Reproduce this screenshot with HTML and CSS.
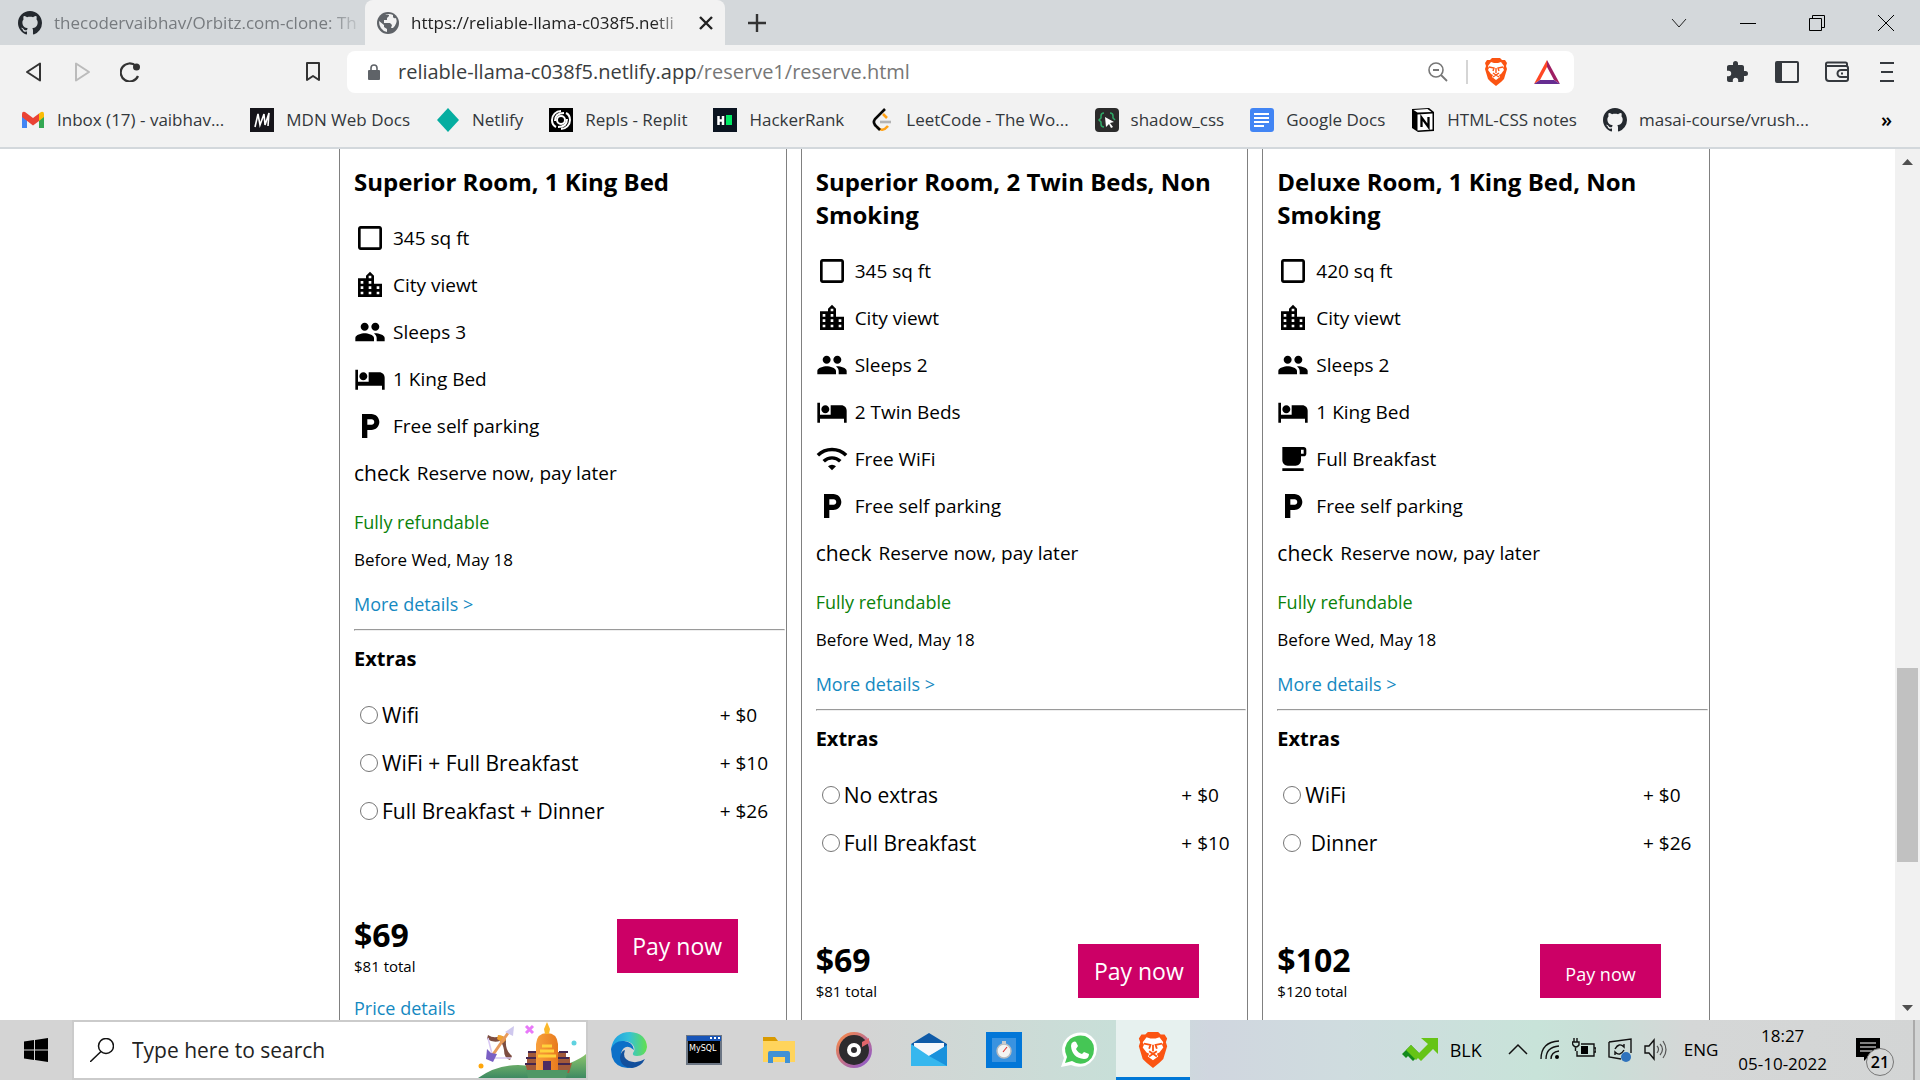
FILE: index.html
```
<!DOCTYPE html>
<html lang="en">
<head>
<meta charset="utf-8">
<title>Reserve a room</title>
<link rel="stylesheet" href="styles.css">
</head>
<body>
<svg class="sprite" aria-hidden="true">
  <symbol id="square" viewBox="0 0 24 24"><path d="M19 5v14H5V5h14m0-2H5c-1.1 0-2 .9-2 2v14c0 1.1.9 2 2 2h14c1.1 0 2-.9 2-2V5c0-1.1-.9-2-2-2z"/></symbol>
  <symbol id="city" viewBox="0 0 24 24"><path d="M15 11V5l-3-3-3 3v2H3v14h18V11h-6zm-8 8H5v-2h2v2zm0-4H5v-2h2v2zm0-4H5V9h2v2zm6 8h-2v-2h2v2zm0-4h-2v-2h2v2zm0-4h-2V9h2v2zm0-4h-2V5h2v2zm6 12h-2v-2h2v2zm0-4h-2v-2h2v2z"/></symbol>
  <symbol id="people" viewBox="0 0 24 24"><path d="M16 11c1.66 0 2.99-1.34 2.99-3S17.66 5 16 5c-1.66 0-3 1.34-3 3s1.34 3 3 3zm-8 0c1.66 0 2.99-1.34 2.99-3S9.66 5 8 5C6.34 5 5 6.34 5 8s1.34 3 3 3zm0 2c-2.33 0-7 1.17-7 3.5V19h14v-2.5c0-2.33-4.67-3.5-7-3.5zm8 0c-.29 0-.62.02-.97.05 1.16.84 1.97 1.97 1.97 3.45V19h6v-2.5c0-2.33-4.67-3.5-7-3.5z"/></symbol>
  <symbol id="bed" viewBox="0 0 24 24"><path d="M7 13c1.66 0 3-1.34 3-3S8.66 7 7 7s-3 1.34-3 3 1.34 3 3 3zm12-6h-8v7H3V5H1v15h2v-3h18v3h2v-9c0-2.21-1.79-4-4-4z"/></symbol>
  <symbol id="parking" viewBox="0 0 24 24"><path d="M13 3H6v18h4v-6h3c3.31 0 6-2.69 6-6s-2.69-6-6-6zm.2 8H10V7h3.2c1.1 0 2 .9 2 2s-.9 2-2 2z"/></symbol>
  <symbol id="wifi" viewBox="0 0 24 24"><path d="M1.400 9.200a15 15 0 0 1 21.200 0M5.800 13.700a8.800 8.800 0 0 1 12.400 0" fill="none" stroke="#000" stroke-width="2.600"/><path d="M12 20.500l-3-3a4.200 4.200 0 0 1 6 0z"/></symbol>
  <symbol id="cup" viewBox="0 0 24 24"><path d="M20 3H4v10c0 2.210 1.790 4 4 4h6c2.210 0 4-1.790 4-4v-3h2c1.110 0 2-.890 2-2V5c0-1.110-.890-2-2-2zm0 5h-2V5h2v3zM4 19h16v2H4z"/></symbol>
  <symbol id="github" viewBox="0 0 16 16"><path fill="#24292f" d="M8 0C3.580 0 0 3.580 0 8c0 3.540 2.290 6.530 5.470 7.590.4.070.55-.17.55-.38 0-.19-.01-.82-.01-1.490-2.010.37-2.530-.49-2.690-.94-.09-.23-.48-.94-.82-1.130-.28-.15-.68-.52-.01-.53.63-.01 1.080.58 1.230.82.72 1.210 1.870.87 2.330.66.07-.52.28-.87.51-1.070-1.780-.2-3.640-.89-3.640-3.950 0-.87.31-1.590.82-2.150-.08-.2-.36-1.020.08-2.120 0 0 .67-.21 2.200.82.64-.18 1.320-.27 2-.27.68 0 1.360.09 2 .27 1.530-1.040 2.200-.82 2.200-.82.44 1.100.16 1.920.08 2.120.51.56.82 1.270.82 2.150 0 3.070-1.870 3.750-3.650 3.950.29.25.54.73.54 1.480 0 1.070-.01 1.930-.01 2.200 0 .21.15.46.55.38A8.013 8.013 0 0 0 16 8c0-4.420-3.580-8-8-8z"/></symbol>
  <symbol id="brave" viewBox="0 0 24 28"><path fill="#fb5412" d="M8 0h8l2 2h3l2 3-1 3 1 3-3 10-3 3-5 4-5-4-3-3L1 11l1-3-1-3 2-3h3z"/><path fill="#fff" d="M7 4l3 1h4l3-1 3 4-1 2 1 2-3 4-2 1 1 2-4 3-4-3 1-2-2-1-3-4 1-2-1-2z"/><path d="M5 9l5 1-1 3M19 9l-5 1 1 3M12 10v5M9 15l3 2 3-2M9 19l3-2 3 2" fill="none" stroke="#fb5412" stroke-width="1.400"/></symbol>
</svg>

<header class="browser">
  <nav class="tabs" aria-label="Tabs">
    <div class="tab">
      <svg class="icon24"><use href="#github"/></svg>
      <span class="tab__title">thecodervaibhav/Orbitz.com-clone: Th</span>
    </div>
    <div class="tab tab--active">
      <svg class="icon22" viewBox="0 0 22 22"><circle cx="11" cy="11" r="11" fill="#5f6368"/><path d="M2 9l5 4v2l3 2v3q-8-2-8-11zM8 3q5-1 4 1l-2 2v2H7v3h6l2 2-1 3h2q5-5 3-10-2 1-3-1V3q-4-2-8 0z" fill="#f2f2f2"/></svg>
      <span class="tab__title">https://reliable-llama-c038f5.netli</span>
      <button class="plain" aria-label="Close tab"><svg class="icon14" viewBox="0 0 14 14"><path d="M1 1l12 12M13 1L1 13" stroke="#222" stroke-width="2.400"/></svg></button>
    </div>
    <button class="plain newtab" aria-label="New tab"><svg class="icon18" viewBox="0 0 18 18"><path d="M9 0v18M0 9h18" stroke="#333" stroke-width="2.400"/></svg></button>
    <div class="window">
      <button class="plain" aria-label="Search tabs"><svg class="icon16" viewBox="0 0 16 16"><path d="M1 4l7 8 7-8" fill="none" stroke="#222"/></svg></button>
      <button class="plain" aria-label="Minimize"><svg class="icon16" viewBox="0 0 16 16"><path d="M0 8.500h16" stroke="#000"/></svg></button>
      <button class="plain" aria-label="Restore"><svg class="icon16" viewBox="0 0 16 16"><path d="M.5 3.500h12v12H.5zM3.500 3V.5h12v12H13" fill="none" stroke="#000"/></svg></button>
      <button class="plain" aria-label="Close"><svg class="icon16" viewBox="0 0 16 16"><path d="M0 0l16 16M16 0L0 16" stroke="#000"/></svg></button>
    </div>
  </nav>

  <div class="toolbar">
    <div class="toolbar__nav">
      <button class="plain" aria-label="Back"><svg class="icon20" viewBox="0 0 20 20"><path d="M16 1.500v17L3 10z" fill="none" stroke="#333" stroke-width="2" stroke-linejoin="round"/></svg></button>
      <button class="plain" aria-label="Forward"><svg class="icon20" viewBox="0 0 20 20"><path d="M4 1.500v17L17 10z" fill="none" stroke="#bbb" stroke-width="2" stroke-linejoin="round"/></svg></button>
      <button class="plain" aria-label="Reload"><svg class="icon20" viewBox="0 0 20 20"><path d="M18 14a9 9 0 1 1-2-10" fill="none" stroke="#333" stroke-width="2.200"/><circle cx="16.500" cy="5" r="3.500" fill="#333"/></svg></button>
    </div>
    <button class="plain toolbar__save" aria-label="Bookmark"><svg class="icon20" viewBox="0 0 20 20"><path d="M4 1h12v17l-6-4-6 4z" fill="none" stroke="#333" stroke-width="2" stroke-linejoin="round"/></svg></button>
    <div class="address">
      <svg class="icon16" viewBox="0 0 16 16"><rect x="2" y="6" width="12" height="10" rx="1" fill="#5f6368"/><path d="M5 7V4a3 3 0 0 1 6 0v3" fill="none" stroke="#5f6368" stroke-width="1.600"/></svg>
      <p class="address__url">reliable-llama-c038f5.netlify.app<span>/reserve1/reserve.html</span></p>
      <svg class="icon20" viewBox="0 0 20 20"><circle cx="8" cy="8" r="7" fill="none" stroke="#777" stroke-width="1.600"/><path d="M5 8h6M13 13l6 6" stroke="#777" stroke-width="1.800"/></svg>
      <i class="address__rule"></i>
      <svg class="address__brave"><use href="#brave"/></svg>
      <svg class="address__bat" viewBox="0 0 26 24"><path d="M13 0v7L6 20l-6 4z" fill="#ff4724"/><path d="M13 0l13 24-6-4-7-13z" fill="#9e1f63"/><path d="M0 24l6-4h14l6 4z" fill="#662d91"/></svg>
    </div>
    <div class="toolbar__tools">
      <button class="plain" aria-label="Extensions"><svg class="icon24" viewBox="0 0 24 24"><path fill="#35393e" d="M20.500 11H19V7c0-1.100-.9-2-2-2h-4V3.500a2.500 2.500 0 0 0-5 0V5H4c-1.100 0-2 .9-2 2v3.800h1.500a2.700 2.700 0 0 1 0 5.400H2V20c0 1.100.9 2 2 2h3.800v-1.500a2.700 2.700 0 0 1 5.400 0V22H17c1.100 0 2-.9 2-2v-4h1.500a2.500 2.500 0 0 0 0-5z"/></svg></button>
      <button class="plain" aria-label="Sidebar"><svg class="icon24" viewBox="0 0 24 24"><rect x="1" y="2" width="22" height="20" rx="1" fill="none" stroke="#35393e" stroke-width="2"/><path d="M1 2h6v20H1z" fill="#35393e"/></svg></button>
      <button class="plain" aria-label="Wallet"><svg class="icon24" viewBox="0 0 24 24"><path d="M22 7V4a1.500 1.500 0 0 0-1.500-1.500h-18A1.500 1.500 0 0 0 1 4v14a3 3 0 0 0 3 3h17a2 2 0 0 0 2-2V8a2 2 0 0 0-2-2H1M23 10h-7a3.500 3.500 0 0 0 0 7h7M16 13.500h2" fill="none" stroke="#35393e" stroke-width="2"/></svg></button>
      <button class="plain" aria-label="Menu"><svg class="icon24" viewBox="0 0 24 24"><path d="M5 3h14M6 12h12M5 21h14" stroke="#35393e" stroke-width="2"/></svg></button>
    </div>
  </div>

  <nav class="bookmarks" aria-label="Bookmarks">
    <a href="#"><svg class="icon24" viewBox="0 0 24 24"><path d="M1 6v14h5V10z" fill="#4285f4"/><path d="M23 6v14h-5V10z" fill="#34a853"/><path d="M18 5.500l2-1.500q3-1 3 2v3l-5 4z" fill="#fbbc04"/><path d="M1 6q0-3 3-2l8 6 6-4.500V13l-6 4.500L1 9z" fill="#ea4335"/></svg><span>Inbox (17) - vaibhav...</span></a>
    <a href="#"><svg class="icon24" viewBox="0 0 24 24"><path fill="#15141a" d="M0 0h24v24H0z"/><path d="M5 19L8 6l2 11 4-11 1 11 4-12-1 13" fill="none" stroke="#fff" stroke-width="1.600"/></svg><span>MDN Web Docs</span></a>
    <a href="#"><svg class="icon24" viewBox="0 0 24 24"><path fill="#05ada0" d="M12 0l11 12-11 12L1 12z"/></svg><span>Netlify</span></a>
    <a href="#"><svg class="icon24" viewBox="0 0 24 24"><path d="M0 0h24v24H0z"/><g fill="none" stroke="#fff" stroke-width="2"><circle cx="12" cy="12" r="4"/><path d="M12 3a9 9 0 0 0-9 9q0 5 4 7M12 21a9 9 0 0 0 9-9q0-5-4-7M6 13q0-8 9-8M18 11q0 8-9 8"/></g></svg><span>Repls - Replit</span></a>
    <a href="#"><svg class="icon24" viewBox="0 0 24 24"><path fill="#0b1420" d="M0 0h24v24H0z"/><path d="M5.500 8v9M10 8v9M5 12.500h5" stroke="#fff" stroke-width="2.500"/><path fill="#00ea64" d="M13 7h6v10h-6z"/></svg><span>HackerRank</span></a>
    <a href="#"><svg class="icon24" viewBox="0 0 24 24"><path d="M13 6l4 4M7 19q5 6 11-1" fill="none" stroke="#ffa116" stroke-width="2.600"/><path d="M10 14h11" stroke="#b3b3b3" stroke-width="2.600"/><path d="M15 1L5 11q-3 4 2 8l3 3" fill="none" stroke="#070706" stroke-width="2.600"/></svg><span>LeetCode - The Wo...</span></a>
    <a href="#"><svg class="icon24" viewBox="0 0 24 24"><rect width="24" height="24" rx="4" fill="#2b2b2b"/><path d="M9 5Q6 5 6 8v2l-2 2 2 2v2q0 3 3 3M15 5q3 0 3 3v2l2 2" fill="none" stroke="#2fa866" stroke-width="1.500"/><path d="M10 9l9 5-4 1 3 4-2 1-2-4-3 3z" fill="#fff"/></svg><span>shadow_css</span></a>
    <a href="#"><svg class="icon24" viewBox="0 0 24 24"><rect width="24" height="24" rx="3" fill="#4285f4"/><path d="M4 6h15M4 10h15M4 14h15M4 18h10" stroke="#fff" stroke-width="2"/></svg><span>Google Docs</span></a>
    <a href="#"><svg class="icon24" viewBox="0 0 24 24"><path d="M1 1l17-1 5 4v19l-16 1-6-4z"/><path d="M2.500 2l14-1 4 3-14 .5zM6.500 6.500l15-1v16l-15 1z" fill="#fff"/><path d="M10.500 19V9.500l7 9.500V9" fill="none" stroke="#000" stroke-width="2.300"/></svg><span>HTML-CSS notes</span></a>
    <a href="#"><svg class="icon24"><use href="#github"/></svg><span>masai-course/vrush...</span></a>
    <button class="plain bookmarks__more" aria-label="More bookmarks">»</button>
  </nav>
</header>

<div class="viewport">
  <main class="rooms">
    <article class="room room--three">
      <h2>Superior Room, 1 King Bed</h2>
      <ul class="features">
        <li><svg><use href="#square"/></svg>345 sq ft</li>
        <li><svg><use href="#city"/></svg>City viewt</li>
        <li><svg><use href="#people"/></svg>Sleeps 3</li>
        <li><svg><use href="#bed"/></svg>1 King Bed</li>
        <li><svg><use href="#parking"/></svg>Free self parking</li>
        <li><span class="check">check</span>Reserve now, pay later</li>
      </ul>
      <p class="refund">Fully refundable</p>
      <p class="before">Before Wed, May 18</p>
      <a class="more" href="#">More details &gt;</a>
      <hr>
      <h3>Extras</h3>
      <ul class="extras">
        <li><label><input type="radio" name="a">Wifi</label><span>+ $0</span></li>
        <li><label><input type="radio" name="a">WiFi + Full Breakfast</label><span>+ $10</span></li>
        <li><label><input type="radio" name="a">Full Breakfast + Dinner</label><span>+ $26</span></li>
      </ul>
      <div class="pay">
        <div><p class="price">$69</p><p class="total">$81 total</p></div>
        <button class="pay__button">Pay now</button>
      </div>
      <a class="pricedetails" href="#">Price details</a>
    </article>

    <article class="room">
      <h2>Superior Room, 2 Twin Beds, Non Smoking</h2>
      <ul class="features">
        <li><svg><use href="#square"/></svg>345 sq ft</li>
        <li><svg><use href="#city"/></svg>City viewt</li>
        <li><svg><use href="#people"/></svg>Sleeps 2</li>
        <li><svg><use href="#bed"/></svg>2 Twin Beds</li>
        <li><svg><use href="#wifi"/></svg>Free WiFi</li>
        <li><svg><use href="#parking"/></svg>Free self parking</li>
        <li><span class="check">check</span>Reserve now, pay later</li>
      </ul>
      <p class="refund">Fully refundable</p>
      <p class="before">Before Wed, May 18</p>
      <a class="more" href="#">More details &gt;</a>
      <hr>
      <h3>Extras</h3>
      <ul class="extras">
        <li><label><input type="radio" name="b">No extras</label><span>+ $0</span></li>
        <li><label><input type="radio" name="b">Full Breakfast</label><span>+ $10</span></li>
      </ul>
      <div class="pay">
        <div><p class="price">$69</p><p class="total">$81 total</p></div>
        <button class="pay__button">Pay now</button>
      </div>
    </article>

    <article class="room">
      <h2>Deluxe Room, 1 King Bed, Non Smoking</h2>
      <ul class="features">
        <li><svg><use href="#square"/></svg>420 sq ft</li>
        <li><svg><use href="#city"/></svg>City viewt</li>
        <li><svg><use href="#people"/></svg>Sleeps 2</li>
        <li><svg><use href="#bed"/></svg>1 King Bed</li>
        <li><svg><use href="#cup"/></svg>Full Breakfast</li>
        <li><svg><use href="#parking"/></svg>Free self parking</li>
        <li><span class="check">check</span>Reserve now, pay later</li>
      </ul>
      <p class="refund">Fully refundable</p>
      <p class="before">Before Wed, May 18</p>
      <a class="more" href="#">More details &gt;</a>
      <hr>
      <h3>Extras</h3>
      <ul class="extras">
        <li><label><input type="radio" name="c">WiFi</label><span>+ $0</span></li>
        <li><label><input type="radio" name="c">&nbsp;Dinner</label><span>+ $26</span></li>
      </ul>
      <div class="pay">
        <div><p class="price">$102</p><p class="total">$120 total</p></div>
        <button class="pay__button pay__button--small">Pay now</button>
      </div>
    </article>
  </main>
  <div class="scrollbar">
    <svg viewBox="0 0 25 25"><path d="M7 16h11l-5.500-6z" fill="#505050"/></svg>
    <i class="scrollbar__before"></i><i class="scrollbar__thumb"></i><i class="scrollbar__after"></i>
    <svg viewBox="0 0 25 25"><path d="M7 10h11l-5.500 6z" fill="#505050"/></svg>
  </div>
</div>

<footer class="taskbar">
  <button class="plain start" aria-label="Start"><svg class="icon24" viewBox="0 0 24 24"><path d="M0 3.500L10 2v9.500H0zM11 2l13-2v11.500H11zM0 12.500h10V22L0 20.500zM11 12.500h13V24l-13-2z"/></svg></button>
  <label class="search">
    <svg class="icon24" viewBox="0 0 24 24"><circle cx="16" cy="8" r="7.500" fill="none" stroke="#111" stroke-width="1.500"/><path d="M11 13.500L0 24" stroke="#111" stroke-width="1.500"/></svg>
    <input type="text" placeholder="Type here to search" aria-label="Search">
    <svg class="search__art" viewBox="0 0 108 56">
      <defs><linearGradient id="hill" x2="0" y2="1"><stop stop-color="#8cc56c"/><stop offset="1" stop-color="#3e8a62"/></linearGradient><linearGradient id="dome"><stop stop-color="#f8a03c"/><stop offset="1" stop-color="#e87b1e"/></linearGradient></defs>
      <path d="M0 56q18-13 40-13 30 3 52-2 12-5 16-9v24z" fill="url(#hill)"/>
      <path d="M9 17l1-4q6 4 12 1 6 0 6 5-1 9 6 15l-2 4q-6-2-6-10-1-6-4-9-7 2-13-2z" fill="#7d4d40"/><path d="M20 13q6 0 8 5l-3 3-6-4z" fill="#f0a030"/><path d="M10 16l5 20 18 0" fill="none" stroke="#d8c8f4" stroke-width="1.500"/><path d="M14 34l16-23" stroke="#e79a5c" stroke-width="3"/><path d="M27 10l9-6-1 10z" fill="#cfc8ee"/><path d="M8 37l1-10 4 4 6 1-4 8z" fill="#7a5fc4"/>
      <path d="M48 4l7 7M55 4l-7 7" stroke="#e879f9" stroke-width="3"/><circle cx="3" cy="44" r="2.500" fill="#ffa60a"/><circle cx="96" cy="21" r="2.500" fill="#5fd2e0"/>
      <path d="M50 30h10v-4h18v4h10v5h4v6h2l-3 10H50l-3-10h2v-5h1z" fill="#a25a3a"/><path d="M50 30h9M48 36h10M47 42h11M81 30h9M80 36h11M80 42h12" stroke="#42264f" stroke-width="2"/>
      <path d="M58 50V22q1-11 11-11t11 11v28z" fill="url(#dome)"/><path d="M69 0l3 7-1 5h-4l-1-5z" fill="#fbb92b"/><path d="M64 24h10M62 29h14M60 34h18" stroke="#ffd23c" stroke-width="3"/><path d="M65 39h8v9h-8z" fill="#4c2c63"/><path d="M48 48h42l-2 8H50z" fill="#4f9765"/>
    </svg>
  </label>
  <nav class="apps" aria-label="Pinned apps">
    <button class="plain app" aria-label="Edge"><svg viewBox="0 0 36 36"><defs><linearGradient id="edge" x2="1"><stop stop-color="#1b9de2"/><stop offset=".5" stop-color="#35c1d8"/><stop offset="1" stop-color="#63e04c"/></linearGradient></defs><path d="M0 17Q3 0 19 0q16 1 17 15-1 9-10 9-5 0-4-3 3-4 0-8-8-9-22 4z" fill="url(#edge)"/><path d="M0 17Q4 8 13 9q9 1 10 9-9-8-13 3 0 13 14 14Q6 39 1 25z" fill="#0c70c8"/><path d="M14 18q-3 8 4 11 8 3 16-2-4 8-13 9-12-1-12-11 1-6 5-7z" fill="#124f9c"/></svg></button>
    <button class="plain app" aria-label="MySQL"><svg viewBox="0 0 36 36"><path fill="#6c7684" d="M0 3h36v30H0z"/><path fill="#1855b8" d="M1 4h34v5H1z"/><path d="M2 9h32v22H2z"/><path d="M24 6h2M28 6h2M32 6h2" stroke="#fff" stroke-width="2"/><text x="3" y="19" font-family="DejaVu Sans" font-size="8" fill="#fff">MySQL</text></svg></button>
    <button class="plain app" aria-label="Explorer"><svg viewBox="0 0 36 36"><path fill="#d99a00" d="M2 5h12l3 4v4H2z"/><path fill="#ffd45c" d="M2 9h32v21H2z"/><path fill="#3f91d5" d="M7 31V21q0-2 2-2h18q2 0 2 2v10h-5v-6H12v6z"/></svg></button>
    <button class="plain app" aria-label="Music"><svg viewBox="0 0 36 36"><defs><linearGradient id="disc" x2="1" y2="1"><stop stop-color="#ff8b3d"/><stop offset="1" stop-color="#8455d8"/></linearGradient></defs><circle cx="18" cy="18" r="18" fill="url(#disc)"/><circle cx="18" cy="18" r="15" fill="#2d2b2e"/><circle cx="18" cy="18" r="5" fill="#2d2b2e" stroke="#fff" stroke-width="4"/><path d="M26 10l7-4v5l-7 4z" fill="#e0656a"/></svg></button>
    <button class="plain app" aria-label="Mail"><svg viewBox="0 0 36 36"><path fill="#0f5ba8" d="M0 12L18 1l18 11v4H0z"/><path fill="#f5f7fb" d="M3 11h30v14H3z"/><path fill="#36b7ee" d="M0 12l18 12 18-10v20H0z"/><path fill="#1991dc" d="M36 13v21L18 24z"/></svg></button>
    <button class="plain app" aria-label="Timer"><svg viewBox="0 0 36 36"><path fill="#0277d8" d="M0 0h36v36H0z"/><path fill="#3a93e0" d="M6 6h24v24H6z"/><circle cx="18" cy="19" r="7" fill="#f4f4f2" stroke="#b8bcc0" stroke-width="1.500"/><path d="M16 9h4v3h-4z" fill="#ccc"/><path d="M17 20l4-5" stroke="#d33" stroke-width="1.200"/></svg></button>
    <button class="plain app" aria-label="WhatsApp"><svg viewBox="0 0 36 36"><path d="M0 35l3-9Q-2 15 6 6 14-1 25 1q11 5 11 16-1 12-12 17-8 2-14-1z" fill="#fff"/><path d="M4 31l2-6Q1 15 9 7q7-5 15-3 9 4 9 13 0 10-9 14-7 2-13-2z" fill="#45c655"/><path d="M12 10q2-1 3 0l2 4-2 3q2 4 6 5l2-2 5 2q0 5-5 5Q11 26 10 14q0-3 2-4z" fill="#fff"/></svg></button>
    <button class="plain app app--active" aria-label="Brave"><svg viewBox="0 0 36 36"><use href="#brave" x="2" width="32" height="36"/></svg></button>
  </nav>
  <div class="tray">
    <svg class="tray__stock" viewBox="0 0 36 24"><path d="M0 16l9-9 9 9-7 7-5-5-2 2z" fill="#138a1c"/><path d="M9 7l10 10-5 5-10-10zM19 0h17v16l-5-5-12 12-5-5L26 6z" fill="#66c416"/></svg>
    <span class="tray__label">BLK</span>
    <svg class="icon20" viewBox="0 0 20 20"><path d="M1 14l9-9 9 9" fill="none" stroke="#111" stroke-width="1.500"/></svg>
    <svg class="icon20" viewBox="0 0 20 20"><path d="M1 19Q1 2 19 1M6 19Q6 7 19 6M11 19q0-7 8-8" fill="none" stroke="#111" stroke-width="1.300"/><circle cx="17" cy="17" r="2"/></svg>
    <svg class="icon24" viewBox="0 0 24 24"><path d="M9 6h13v12H5v-5M22 10h2v4h-2M5 0v4M2 0v4M0 4h7v3q-3 4-6 0zM3.500 9v4" fill="none" stroke="#111" stroke-width="1.400"/><path d="M9 8h7v8H9z"/></svg>
    <svg class="icon24" viewBox="0 0 24 24"><path d="M1 4l22-3v14M1 4v15l12 2M7 11q4-7 9-2V6M16 12q-4 7-9 2v3" fill="none" stroke="#111" stroke-width="1.400"/><circle cx="18" cy="19" r="5" fill="#2f73bd"/></svg>
    <svg class="icon24" viewBox="0 0 24 24"><path d="M1 8h4l5-6v19l-5-6H1z" fill="none" stroke="#111" stroke-width="1.400"/><path d="M13 8q3 3 0 7M16 6q5 5 0 11M19 3q6 9 0 17" fill="none" stroke="#555" stroke-width="1.200"/></svg>
    <span class="tray__lang">ENG</span>
    <p class="tray__time">18:27<br>05-10-2022</p>
    <div class="notice"><svg viewBox="0 0 24 24"><path d="M0 0h24v19H12l-4 4v-4H0z"/><path d="M4 5h16M4 9h16M4 13h12" stroke="#fff" stroke-width="1.200"/></svg><span>21</span></div>
    <i class="tray__edge"></i>
  </div>
</footer>
</body>
</html>
```
FILE: styles.css
```
* { box-sizing: border-box; }

body {
  margin: 0;
  height: 100vh;
  display: flex;
  flex-direction: column;
  overflow: hidden;
  font-family: "Open Sans", "Noto Sans", sans-serif;
  font-size: 17px;
  line-height: 24px;
  color: #000;
  background: #fff;
}

h2, h3, p, ul { margin: 0; padding: 0; }
ul { list-style: none; }
a { color: #1589c1; text-decoration: none; }
svg { display: block; flex: none; }
.sprite { position: absolute; width: 0; height: 0; }

.plain {
  padding: 0;
  border: 0;
  background: none;
  font: inherit;
  color: inherit;
}

.icon14 { width: 14px; height: 14px; }
.icon16 { width: 16px; height: 16px; }
.icon18 { width: 18px; height: 18px; }
.icon20 { width: 20px; height: 20px; }
.icon22 { width: 22px; height: 22px; }
.icon24 { width: 24px; height: 24px; }

/* Browser frame */
.browser { flex: none; background: #f2f2f2; border-bottom: 2px solid #d3d8dc; }

.tabs { display: flex; height: 45px; background: #d4d8db; }

.tab {
  display: flex;
  align-items: center;
  gap: 12px;
  width: 365px;
  padding: 0 0 0 18px;
  color: #777b7f;
}

.tab--active {
  width: 360px;
  padding: 0 12px;
  border-radius: 8px 8px 0 0;
  background: #f2f2f2;
  color: #222;
}

.tab__title {
  flex: 1;
  white-space: nowrap;
  -webkit-mask-image: linear-gradient(90deg, #000 88%, transparent);
  mask-image: linear-gradient(90deg, #000 88%, transparent);
}

.newtab { margin-left: 23px; }
.window { display: flex; gap: 53px; margin-left: auto; padding-right: 26px; }

.toolbar { display: flex; align-items: center; height: 54px; padding: 0 21px 0 24px; }
.toolbar__nav { display: flex; gap: 28px; }
.toolbar__save { margin-left: 163px; }

.address {
  flex: 1;
  display: flex;
  align-items: center;
  height: 42px;
  margin-left: 24px;
  padding: 0 14px 0 19px;
  border-radius: 8px;
  background: #fff;
}

.address__url { flex: 1; margin-left: 16px; font-size: 20px; color: #3a3d40; }
.address__url span { color: #777; }
.address__rule { width: 2px; height: 24px; margin: 0 16px 0 18px; background: #d5d5d5; }
.address__brave { width: 24px; height: 28px; }
.address__bat { width: 26px; height: 24px; margin-left: 26px; }
.toolbar__tools { display: flex; gap: 26px; margin-left: 151px; }

.bookmarks { display: flex; align-items: center; gap: 26px; height: 48px; padding: 0 28px 6px 21px; }
.bookmarks a { display: flex; align-items: center; gap: 12px; color: #33373b; white-space: nowrap; }
.bookmarks__more { margin-left: auto; font-size: 20px; font-weight: 600; }

/* Page */
.viewport { flex: 1; min-height: 0; display: flex; overflow: hidden; }

.rooms {
  flex: 1;
  display: grid;
  grid-template-columns: repeat(3, minmax(0, 1fr));
  gap: 14px;
  padding: 0 185px 0 339px;
}

.room {
  padding: 16px 0 0 14px;
  border: solid #808080;
  border-width: 0 1px;
}

.room h2 { padding-right: 14px; font-size: 24px; line-height: 33px; }

.features { margin: 16px 0 14px; }
.features li { display: flex; align-items: center; gap: 7px; height: 47px; font-size: 19px; }
.features svg { width: 32px; height: 32px; }
.check { font-size: 21px; }

.refund { font-size: 18px; color: #0a820a; }
.before { margin: 14px 0 20px; font-size: 17px; }
.more { display: block; font-size: 18px; }
.room hr { margin: 13px 1px 16px 0; }
.room h3 { margin-bottom: 20px; font-size: 20px; line-height: 24px; }

.extras { margin-bottom: 74px; }
.room--three .extras { margin-bottom: 81px; }
.extras li { display: flex; align-items: center; height: 48px; font-size: 21px; }
.extras label { flex: 1; display: flex; align-items: center; }
.extras input { width: 18px; height: 18px; margin: 0 4px 0 6px; }
.extras span { width: 66px; font-size: 19px; }

.pay { display: flex; justify-content: space-between; align-items: flex-start; padding-right: 48px; }
.price { font-size: 32px; line-height: 38px; font-weight: 700; }
.total { font-size: 15px; line-height: 24px; }

.pay__button {
  width: 121px;
  height: 54px;
  margin-top: 3px;
  padding: 0;
  border: 0;
  background: #cc0066;
  color: #fff;
  font-family: inherit;
  font-size: 23px;
}

.pay__button--small { padding-top: 6px; font-size: 18px; }
.pricedetails { display: block; margin-top: 18px; font-size: 18px; }

.scrollbar { display: flex; flex-direction: column; width: 25px; background: #f1f1f1; }
.scrollbar svg { width: 25px; height: 25px; }
.scrollbar__before { flex: 494; }
.scrollbar__thumb { flex: 194; margin: 0 2px; background: #c1c1c1; }
.scrollbar__after { flex: 133; }

/* Taskbar */
.taskbar {
  flex: none;
  display: flex;
  height: 60px;
  background: linear-gradient(90deg, #d4d4d4 45%, #c8dfd8 58%, #d0d6df 63%, #cfdcdf 70%, #c8e3d9 80%, #c9dfd7 83%, #d5d7d7 88%, #d3d5d5);
}

.start { width: 72px; padding-left: 24px; }

.search {
  display: flex;
  align-items: center;
  width: 516px;
  padding-left: 16px;
  border: 2px solid #cbcbcb;
  background: #fff;
}

.search input {
  flex: 1;
  min-width: 0;
  margin-left: 18px;
  padding: 0;
  border: 0;
  outline: 0;
  font-family: inherit;
  font-size: 21px;
}

.search input::placeholder { color: #222; opacity: 1; }
.search__art { width: 108px; height: 56px; }

.apps { display: flex; margin-left: 3px; }
.app { display: grid; place-items: center; width: 75px; }
.app svg { width: 36px; height: 36px; }
.app--active { width: 74px; border-top: 3px solid #e7f1ef; border-bottom: 3px solid #0078d7; background: #e7f1ef; }

.tray { display: flex; align-items: center; margin-left: auto; padding-right: 5px; }
.tray svg { margin-right: 12px; }
.tray .tray__stock { width: 36px; height: 24px; }
.tray__label { margin-right: 26px; font-size: 18px; }
.tray__lang { margin: 0 20px 0 4px; }
.tray__time { line-height: 28px; text-align: center; }

.notice { position: relative; margin: 0 18px 0 29px; }
.notice svg { width: 24px; height: 24px; margin-right: 15px; }
.notice span {
  position: absolute;
  left: 10px;
  top: 10px;
  width: 28px;
  height: 28px;
  border: 1px solid #777;
  border-radius: 50%;
  background: #d5d7d7;
  font-size: 16px;
  font-weight: 600;
  line-height: 26px;
  text-align: center;
}

.tray__edge { width: 2px; height: 60px; background: #aaa; }
```
